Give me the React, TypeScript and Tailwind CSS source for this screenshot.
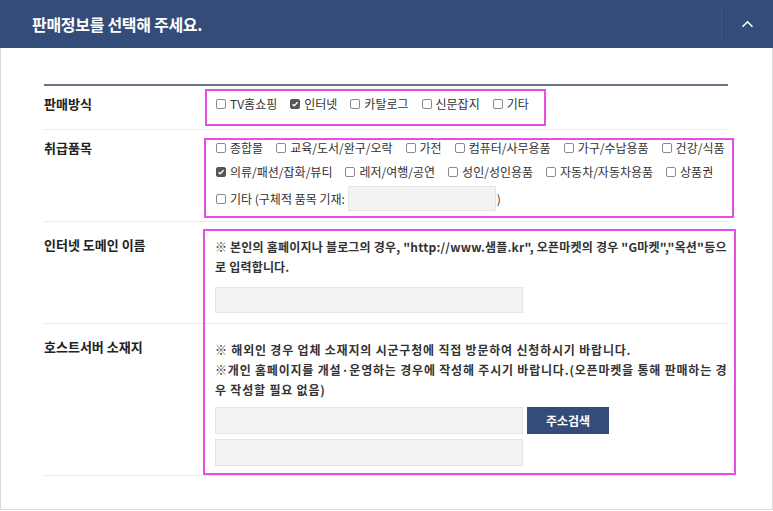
import React from "react";

const font = { fontFamily: '"Noto Sans CJK KR", "Noto Sans", sans-serif' };

const Box = ({ checked = false }: { checked?: boolean }) => (
  <span
    className={`inline-flex items-center justify-center w-[10px] h-[10px] rounded-[2px] border shrink-0 ${
      checked ? "bg-[#555555] border-[#555555]" : "bg-white border-[#8a8a8a]"
    }`}
  >
    {checked && (
      <svg width="8" height="8" viewBox="0 0 8 8" fill="none">
        <path d="M1.5 4.2 L3.2 5.8 L6.6 2.2" stroke="#fff" strokeWidth="1.4" />
      </svg>
    )}
  </span>
);

const Check = ({ label, checked = false }: { label: string; checked?: boolean }) => (
  <label className="inline-flex items-center gap-[4px] mr-[13px] whitespace-nowrap">
    <Box checked={checked} />
    <span>{label}</span>
  </label>
);

const Field = ({ className = "" }: { className?: string }) => (
  <div className={`bg-[#f3f3f3] border border-[#e4e4e4] ${className}`} />
);

const Label = ({ text, pt }: { text: string; pt: string }) => (
  <div className={`w-[160px] shrink-0 ${pt} text-[13px] leading-[16px] font-semibold text-[#222]`}>
    {text}
  </div>
);

export default function App() {
  return (
    <div className="w-[773px] h-[511px] bg-white" style={font}>
      {/* header */}
      <div className="h-[48px] bg-[#344c79] flex items-center">
        <h2 className="pl-[32px] text-white text-[16px] font-bold tracking-[-0.3px]">
          판매정보를 선택해 주세요.
        </h2>
        <div className="ml-auto flex items-center h-full">
          <div className="w-px h-[32px] bg-[#41588a]" />
          <div className="w-[51px] flex items-center justify-center">
            <svg width="13" height="8" viewBox="0 0 13 8" fill="none">
              <path d="M1.5 6.8 L6.5 1.8 L11.5 6.8" stroke="#fff" strokeWidth="1.6" />
            </svg>
          </div>
        </div>
      </div>

      {/* body */}
      <div className="h-[462px] border-x border-b border-[#dadada] pt-[36px] pl-[43px]">
        <div className="relative w-[684px] border-t-2 border-[#6b7482] text-[12px] text-[#333]">
          {/* 판매방식 */}
          <div className="flex h-[44px] border-b border-[#ececec]">
            <Label text="판매방식" pt="pt-[10px]" />
            <div className="pl-[12px] pt-[10px] leading-[16px] flex items-start">
              <div className="flex items-center h-[16px]">
                <Check label="TV홈쇼핑" />
                <Check label="인터넷" checked />
                <Check label="카탈로그" />
                <Check label="신문잡지" />
                <Check label="기타" />
              </div>
            </div>
          </div>

          {/* 취급품목 */}
          <div className="flex h-[92px] border-b border-[#ececec]">
            <Label text="취급품목" pt="pt-[10px]" />
            <div className="pl-[12px] pt-[10px] leading-[16px] flex flex-col">
              <div className="flex items-center h-[16px]">
                <Check label="종합몰" />
                <Check label="교육/도서/완구/오락" />
                <Check label="가전" />
                <Check label="컴퓨터/사무용품" />
                <Check label="가구/수납용품" />
                <Check label="건강/식품" />
              </div>
              <div className="flex items-center h-[16px] mt-[8px]">
                <Check label="의류/패션/잡화/뷰티" checked />
                <Check label="레저/여행/공연" />
                <Check label="성인/성인용품" />
                <Check label="자동차/자동차용품" />
                <Check label="상품권" />
              </div>
              <div className="flex items-center h-[25px] mt-[6px] whitespace-nowrap">
                <Box />
                <span className="ml-[4px]">기타 (구체적 품목 기재:</span>
                <Field className="w-[148px] h-[25px] ml-[3px]" />
                <span className="ml-[1px]">)</span>
              </div>
            </div>
          </div>

          {/* 인터넷 도메인 이름 */}
          <div className="flex h-[102px] border-b border-[#ececec]">
            <Label text="인터넷 도메인 이름" pt="pt-[15px]" />
            <div className="pl-[11px] pt-[15px] flex flex-col">
              <p className="leading-[20px] font-semibold text-[#333] whitespace-nowrap tracking-[0.2px]">
                ※ 본인의 홈페이지나 블로그의 경우, "http://www.샘플.kr", 오픈마켓의 경우 "G마켓","옥션"등으
                <br />로 입력합니다.
              </p>
              <Field className="w-[308px] h-[26px] mt-[10px]" />
            </div>
          </div>

          {/* 호스트서버 소재지 */}
          <div className="flex h-[152px] border-b border-[#ececec]">
            <Label text="호스트서버 소재지" pt="pt-[15px]" />
            <div className="pl-[11px] pt-[16px] flex flex-col">
              <p className="leading-[20px] font-semibold text-[#333] whitespace-nowrap tracking-[0.8px]">
                ※ 해외인 경우 업체 소재지의 시군구청에 직접 방문하여 신청하시기 바랍니다.
                <br />
                ※개인 홈페이지를 개설·운영하는 경우에 작성해 주시기 바랍니다.(오픈마켓을 통해 판매하는 경
                <br />우 작성할 필요 없음)
              </p>
              <div className="flex mt-[7px] gap-[4px]">
                <Field className="w-[308px] h-[27px]" />
                <button className="w-[82px] h-[27px] bg-[#344c79] text-white text-[12px] font-bold">
                  주소검색
                </button>
              </div>
              <Field className="w-[308px] h-[27px] mt-[5px]" />
            </div>
          </div>

          {/* highlight boxes */}
          <div className="absolute left-[161px] top-[3px] w-[341px] h-[37px] border-2 border-[#e54fe5] pointer-events-none" />
          <div className="absolute left-[160px] top-[52px] w-[530px] h-[80px] border-2 border-[#e54fe5] pointer-events-none" />
          <div className="absolute left-[159px] top-[143px] w-[533px] h-[246px] border-2 border-[#e54fe5] pointer-events-none" />
        </div>
      </div>
    </div>
  );
}
